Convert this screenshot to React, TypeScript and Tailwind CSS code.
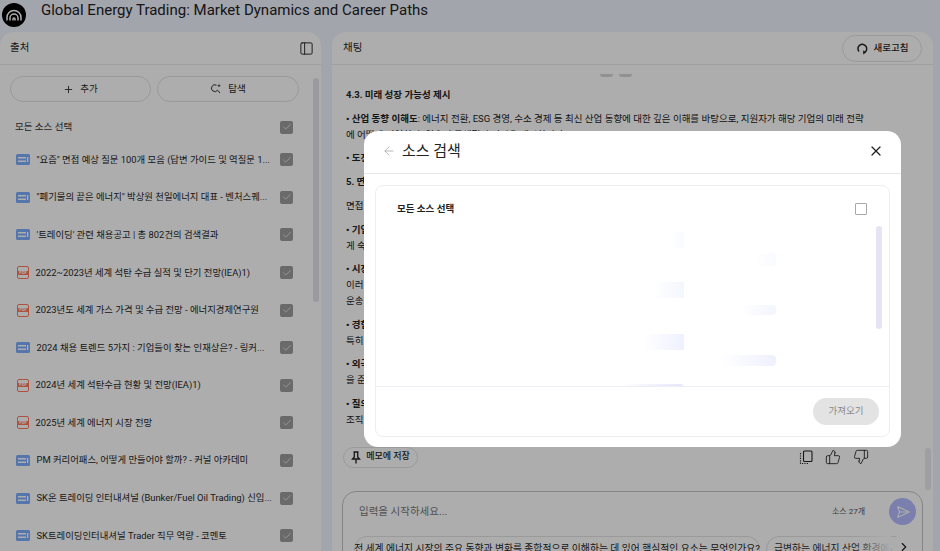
import React from "react";
import { ArrowLeft, Check, ChevronRight, PanelLeft, Plus, SendHorizontal, ThumbsDown, ThumbsUp, X } from "lucide-react";

const KR = "font-['Roboto','Noto_Sans_CJK_KR',sans-serif]";

const sources = [
  { type: "web", title: "\"요즘\" 면접 예상 질문 100개 모음 (답변 가이드 및 역질문 1..." },
  { type: "web", title: "\"폐기물의 끝은 에너지\" 박상원 천일에너지 대표 - 벤처스퀘..." },
  { type: "web", title: "'트레이딩' 관련 채용공고 | 총 802건의 검색결과" },
  { type: "pdf", title: "2022~2023년 세계 석탄 수급 실적 및 단기 전망(IEA)1)" },
  { type: "pdf", title: "2023년도 세계 가스 가격 및 수급 전망 - 에너지경제연구원" },
  { type: "web", title: "2024 채용 트렌드 5가지 : 기업들이 찾는 인재상은? - 링커..." },
  { type: "pdf", title: "2024년 세계 석탄수급 현황 및 전망(IEA)1)" },
  { type: "pdf", title: "2025년 세계 에너지 시장 전망" },
  { type: "web", title: "PM 커리어패스, 어떻게 만들어야 할까? - 커널 아카데미" },
  { type: "web", title: "SK온 트레이딩 인터내셔널 (Bunker/Fuel Oil Trading) 신입..." },
  { type: "web", title: "SK트레이딩인터내셔널 Trader 직무 역량 - 코멘토" },
];

const chat = [
  { bold: "4.3. 미래 성장 가능성 제시", lines: [] },
  {
    bold: "• 산업 동향 이해도",
    lines: [
      ": 에너지 전환, ESG 경영, 수소 경제 등 최신 산업 동향에 대한 깊은 이해를 바탕으로, 지원자가 해당 기업의 미래 전략",
      "에 어떻게 기여할 수 있으며 구체적인 비전을 제시합니다.",
    ],
  },
  { bold: "• 도전", lines: [""] },
  { bold: "5. 면접", lines: [] },
  { bold: "", lines: ["면접"] },
  { bold: "• 기업", lines: ["", "게 숙"] },
  { bold: "• 시장", lines: ["", "이러", "운송"] },
  { bold: "• 경험", lines: ["", "특히"] },
  { bold: "• 외국", lines: ["", "을 준"] },
  { bold: "• 질의", lines: ["", "조직"] },
];

function Box() {
  return (
    <span className="flex h-[13px] w-[13px] shrink-0 items-center justify-center rounded-[2px] bg-[#9c9c9c]">
      <Check size={10} strokeWidth={1.6} className="text-white" />
    </span>
  );
}

function SourceIcon({ type }: { type: string }) {
  if (type === "pdf") {
    return (
      <span className="ml-[1px] flex h-[13px] w-[12px] shrink-0 items-center justify-center rounded-[2px] border border-[#ff7a5c] bg-white">
        <span className="flex h-[4px] w-[12px] shrink-0 items-center justify-center overflow-hidden bg-[#ff7a5c] text-[4px] font-bold leading-none text-white">
          PDF
        </span>
      </span>
    );
  }
  return (
    <svg width="14" height="11" viewBox="0 0 14 11" className="shrink-0">
      <rect width="14" height="11" rx="1.5" fill="#7dafff" />
      <rect x="2" y="3" width="8" height="1.5" fill="#fff" />
      <rect x="2" y="6.5" width="8" height="1.5" fill="#fff" />
      <rect x="11" y="3" width="1.3" height="5" fill="#fff" />
    </svg>
  );
}

function Discover() {
  return (
    <svg width="12" height="12" viewBox="0 0 12 12" fill="none" stroke="#333" strokeWidth="1">
      <path d="M6.5 2.2A3.4 3.4 0 1 0 7.6 7.2L10 10" />
      <path d="M9 .8l.5 1.4 1.4.5-1.4.5L9 4.6l-.5-1.4-1.4-.5 1.4-.5z" fill="#333" stroke="none" />
    </svg>
  );
}

function Refresh() {
  return (
    <svg width="13" height="13" viewBox="0 0 13 13" fill="none" stroke="#222" strokeWidth="1.5">
      <path d="M3 9.6A4.4 4.4 0 1 1 8 10.8" />
      <path d="M7.2 8.2v4.4l2.6-2.2z" fill="#222" stroke="none" />
    </svg>
  );
}

function PinIcon() {
  return (
    <svg width="10" height="13" viewBox="0 0 10 13" fill="none" stroke="#222" strokeWidth="1.3">
      <path d="M2.5 1h5M3.3 1v5L1.5 8h7L6.7 6V1M5 8v4.5" />
    </svg>
  );
}

function CopyIcon() {
  return (
    <svg width="14" height="15" viewBox="0 0 14 15" fill="none" stroke="#222" strokeWidth="1.1">
      <rect x="4.5" y="1" width="8.5" height="10.5" rx="1" />
      <path d="M1.5 3v10.5H10" strokeDasharray="1.2 1.2" />
    </svg>
  );
}

export default function App() {
  return (
    <div className={`relative flex h-[551px] w-[940px] flex-col overflow-hidden bg-[#f0f3ff] text-[#1f1f1f] ${KR}`}>
      {/* top bar */}
      <div className="flex h-[32px] shrink-0 items-center">
        <div className="ml-[2px] mt-[-3px] flex h-[24px] w-[24px] items-center justify-center rounded-full bg-black">
          <svg width="16" height="14" viewBox="0 0 16 14" fill="none" stroke="#fff" strokeWidth="1.5">
            <path d="M1 12.5V9.5a7 7 0 0 1 14 0v3" />
            <path d="M4 12.5V10a4 4 0 0 1 8 0v2.5" />
            <path d="M7 12.5v-1.5a1 1 0 0 1 2 0v1.5" />
          </svg>
        </div>
        <div className="ml-[15px] mt-[-12px] text-[15px] leading-[20px] text-[#222]">
          Global Energy Trading: Market Dynamics and Career Paths
        </div>
      </div>

      <div className="flex min-h-0 flex-1 gap-[11px]">
        {/* sources panel */}
        <div className="flex w-[321px] shrink-0 flex-col rounded-t-[14px] bg-white">
          <div className="flex h-[33px] shrink-0 items-center justify-between border-b border-[#ececec] pl-[10px] pr-[7px]">
            <span className="text-[10.5px]">출처</span>
            <PanelLeft size={15} strokeWidth={1.5} className="text-[#222]" />
          </div>
          <div className="flex min-h-0 flex-1">
            <div className="w-[306px] shrink-0">
              <div className="ml-[10px] mt-[11px] flex gap-[6px]">
                <div className="flex h-[26px] w-[141px] items-center justify-center gap-[6px] rounded-full border border-[#e3e3e3] text-[9.5px]">
                  <Plus size={11} className="text-[#333]" />
                  추가
                </div>
                <div className="flex h-[26px] w-[142px] items-center justify-center gap-[6px] rounded-full border border-[#e3e3e3] text-[9.5px]">
                  <Discover />
                  탐색
                </div>
              </div>
              <div className="mt-[11px] flex h-[28px] items-center justify-between pl-[15px] pr-[13px]">
                <span className="text-[9.5px] text-[#333]">모든 소스 선택</span>
                <Box />
              </div>
              {sources.map((s) => (
                <div key={s.title} className="flex h-[37.6px] items-center pl-[16px] pr-[13px]">
                  <SourceIcon type={s.type} />
                  <span className="ml-[6.5px] w-[237px] whitespace-nowrap text-[9.4px] text-[#262626]">{s.title}</span>
                  <span className="ml-auto">
                    <Box />
                  </span>
                </div>
              ))}
            </div>
            <div className="ml-[7px] mt-[13px] h-[224px] w-[6px] rounded-full bg-[#e4e4ea]" />
          </div>
        </div>

        {/* chat panel */}
        <div className="flex w-[601px] shrink-0 flex-col rounded-t-[14px] bg-white">
          <div className="flex h-[33px] shrink-0 items-center justify-between border-b border-[#ececec] pl-[11px] pr-[11px]">
            <span className="text-[10.5px]">채팅</span>
            <div className="flex h-[27px] w-[80px] items-center justify-center gap-[5px] rounded-full border border-[#e3e3e3] text-[9.5px] font-medium">
              <Refresh />
              새로고침
            </div>
          </div>
          <div className="flex justify-center gap-[6px] pr-[34px] pt-[9px]">
            <span className="h-[3px] w-[13px] rounded-b-full bg-[#d6d6d6]" />
            <span className="h-[3px] w-[13px] rounded-b-full bg-[#d6d6d6]" />
          </div>
          <div className="h-[369px] shrink-0 pl-[14px] pt-[10px] text-[9.5px] leading-[15.8px] text-[#222]">
            {chat.map((p, i) => (
              <div key={i} className="mb-[8px] whitespace-nowrap">
                {p.bold && <span className="font-bold">{p.bold}</span>}
                {p.lines.map((line, j) =>
                  j === 0 && p.bold ? (
                    <span key={j}>{line}</span>
                  ) : (
                    <div key={j}>{line}</div>
                  ),
                )}
              </div>
            ))}
          </div>
          <div className="flex h-[22px] shrink-0 items-center justify-between pl-[11px] pr-[64px]">
            <div className="flex h-[21px] w-[75px] items-center justify-center gap-[5px] rounded-full border border-[#e3e3e3] text-[9px] font-medium">
              <PinIcon />
              메모에 저장
            </div>
            <div className="flex items-center gap-[12px] text-[#222]">
              <CopyIcon />
              <ThumbsUp size={16} strokeWidth={1.3} />
              <ThumbsDown size={16} strokeWidth={1.3} />
            </div>
          </div>
          <div className="ml-[10px] mt-[23px] h-[80px] w-[581px] shrink-0 rounded-[14px] border border-[#c4c4c4] px-[10px] pt-[6px]">
            <div className="flex h-[27px] items-center">
              <span className="ml-[6px] text-[10.5px] text-[#777]">입력을 시작하세요...</span>
              <span className="ml-auto text-[8px] text-[#555]">소스 27개</span>
              <span className="ml-[24px] mr-[-4px] flex h-[27px] w-[27px] items-center justify-center rounded-full bg-[#b5bcff]">
                <SendHorizontal size={14} className="text-white" />
              </span>
            </div>
            <div className="relative mt-[11px] flex gap-[6px]">
              <span className="ml-[1px] flex h-[26px] w-[406px] shrink-0 items-center justify-center rounded-full border border-[#e3e3e3] text-[9.8px] whitespace-nowrap">
                전 세계 에너지 시장의 주요 동향과 변화를 종합적으로 이해하는 데 있어 핵심적인 요소는 무엇인가요?
              </span>
              <span className="flex h-[26px] w-[150px] shrink-0 items-center overflow-hidden rounded-full border border-[#e3e3e3] pl-[7px] text-[9.8px] whitespace-nowrap text-[#333]">
                급변하는 에너지 산업 환경에서
              </span>
              {/* fades the second chip out under the arrow */}
              <span className="absolute left-[500px] top-0 h-[26px] w-[38px] bg-linear-to-r from-transparent to-white" />
              <span className="absolute left-[538px] top-[-2px] flex h-[26px] w-[26px] items-center justify-center rounded-full bg-white">
                <ChevronRight size={14} className="text-[#222]" />
              </span>
            </div>
          </div>
        </div>
      </div>

      {/* dim layer and dialog */}
      <div className="absolute inset-0 bg-black/32" />
      <div className="absolute left-[364px] top-[131px] flex h-[316px] w-[537px] flex-col rounded-[14px] bg-white">
        <div className="flex h-[43px] shrink-0 items-center border-b border-[#e8e8e8] pb-[2px] pl-[18px] pr-[17px]">
          <ArrowLeft size={14} strokeWidth={1.5} className="text-[#b0b0b0]" />
          <span className="ml-[6px] text-[15px] text-[#222]">소스 검색</span>
          <X size={16} strokeWidth={1.8} className="ml-auto text-[#222]" />
        </div>
        <div className="mx-[11px] mt-[11px] flex h-[252px] flex-col rounded-[8px] border border-[#eeeeee]">
          <div className="flex h-[201px] shrink-0 overflow-hidden border-b border-[#eeeff5]">
            <div className="w-[499px] shrink-0">
              <div className="flex h-[46px] items-center justify-between pl-[21px] pr-[8px]">
                <span className="text-[9.5px] font-bold text-[#222]">모든 소스 선택</span>
                <span className="h-[12px] w-[12px] rounded-[1px] border-[1.5px] border-[#a8a8a8]" />
              </div>
              <div className="ml-[296px] h-[16px] w-[12px] bg-linear-to-r from-white to-[#f9faff]" />
              <div className="ml-[380px] mt-[5px] h-[13px] w-[20px] rounded-r bg-linear-to-r from-white to-[#f9faff]" />
              <div className="ml-[278px] mt-[16px] h-[16px] w-[30px] bg-linear-to-r from-white to-[#f3f6fe]" />
              <div className="ml-[365px] mt-[7px] h-[10px] w-[35px] rounded-r bg-linear-to-r from-white to-[#f3f4fe]" />
              <div className="ml-[268px] mt-[19px] h-[16px] w-[40px] bg-linear-to-r from-white to-[#eef0fe]" />
              <div className="ml-[345px] mt-[5px] h-[11px] w-[55px] rounded-r bg-linear-to-r from-white to-[#eef0fe]" />
              <div className="ml-[245px] mt-[18px] h-[6px] w-[63px] rounded-t bg-linear-to-r from-white to-[#e3e6fb]" />
            </div>
            <div className="ml-[1px] mt-[40px] h-[103px] w-[6px] rounded-full bg-[#e4e4f2]" />
          </div>
          <div className="flex flex-1 items-center justify-end pr-[10px]">
            <span className="flex h-[27px] w-[66px] items-center justify-center rounded-full bg-[#e3e3e3] text-[9.5px] text-[#8a8a8a]">
              가져오기
            </span>
          </div>
        </div>
      </div>

      {/* chat scrollbar shows next to the input */}
      <div className="absolute left-[925px] top-[448px] h-[42px] w-[6px] rounded-full bg-[#9f9fa3]" />
    </div>
  );
}
